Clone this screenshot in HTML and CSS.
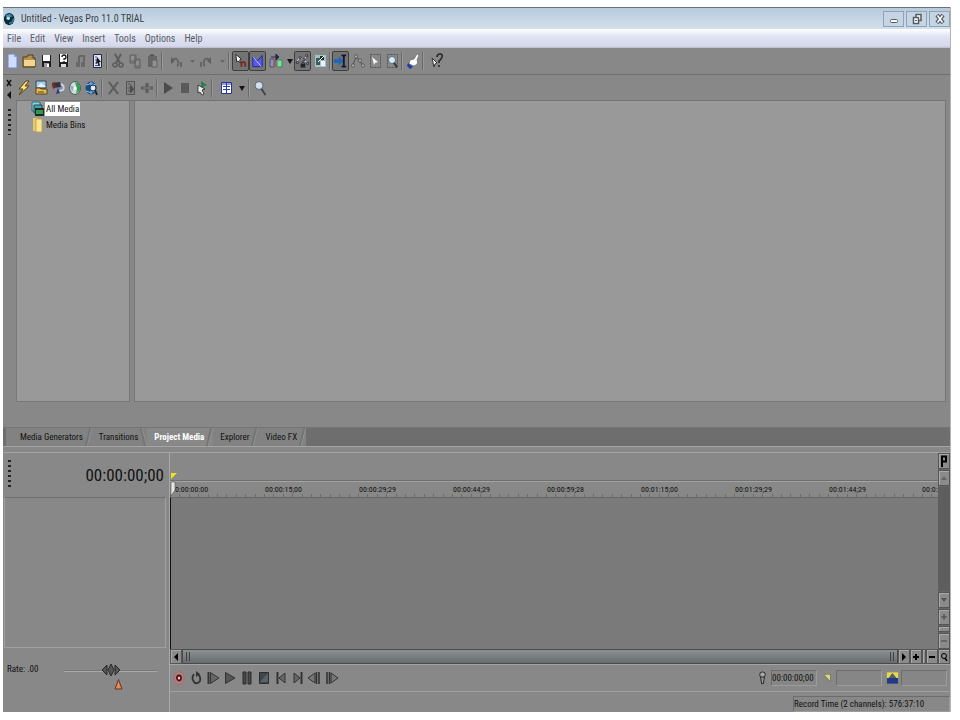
FILE: index.html
```html
<!DOCTYPE html>
<html lang="en">
<head>
<meta charset="utf-8">
<title>Untitled - Vegas Pro 11.0 TRIAL</title>
<link rel="stylesheet" href="styles.css">
</head>
<body>
<div class="window">
  <header class="titlebar">
    <svg class="logo" viewBox="0 0 16 16"><ellipse cx="7" cy="8" rx="6" ry="7" fill="#0d2b38"/><path d="M3 4q5-4 8 1l-3 1q-2-2-3 1z" fill="#3b8fae"/><circle cx="6" cy="7" r="2" fill="#b9e3ee"/><path d="M7 13q5-1 5-6" stroke="#2f7f98" stroke-width="2" fill="none"/></svg>
    <h1>Untitled - Vegas Pro 11.0 TRIAL</h1>
    <div class="winbtns">
      <button aria-label="Minimize"><svg viewBox="0 0 16 14"><rect x="4.500" y="7.500" width="7" height="3" rx="1" fill="#fff" stroke="#555c66"/></svg></button>
      <button aria-label="Restore"><svg viewBox="0 0 16 14"><path d="M7 2.500h5v6H7z" fill="#fff" stroke="#555c66" stroke-width="1.500"/><path d="M4.500 5.500h5v6h-5z" fill="#fff" stroke="#555c66" stroke-width="1.500"/><path d="M6 8.500h2" stroke="#555c66"/></svg></button>
      <button aria-label="Close"><svg viewBox="0 0 16 14"><path d="M5 3l6 8M11 3l-6 8" stroke="#555c66" stroke-width="4"/><path d="M5.500 3.500l5 7M10.500 3.500l-5 7" stroke="#fff" stroke-width="1.500"/></svg></button>
    </div>
  </header>
  <nav class="menu">
    <button>File</button><button>Edit</button><button>View</button><button>Insert</button><button>Tools</button><button>Options</button><button>Help</button>
  </nav>
  <div class="toolbar main-tools">
    <button aria-label="New"><svg viewBox="0 0 16 16"><path d="M4 1h6l3 3v11H4z" fill="#cfdcff" stroke="#6f86c8"/><path d="M10 1v3h3" fill="#8fa7e8"/></svg></button>
    <button aria-label="Open"><svg viewBox="0 0 16 16"><path d="M2 14V4h4l1-2h5v3h2v9z" fill="#b4924a" stroke="#4d3d1c"/><path d="M3 7h11v6H3z" fill="#f1d590"/></svg></button>
    <button aria-label="Save"><svg viewBox="0 0 16 16"><path d="M4 2h9v12H4z" fill="#1d1d22"/><path d="M5 2h7v6H5z" fill="#fff"/><path d="M6 10h5v4H6z" fill="#999"/><path d="M9 11h2v3H9z" fill="#fff"/></svg></button>
    <button aria-label="Save As"><svg viewBox="0 0 16 16"><path d="M4 1h9v13H4z" fill="#1d1d22"/><path d="M5 1h7v8H5z" fill="#fff"/><path d="M7 4q0-2 2-2t2 2-2 2v1M9 8v1" stroke="#111" stroke-width="1.300" fill="none"/><path d="M6 11h5v3H6z" fill="#ddd"/></svg></button>
    <button aria-label="Render As"><svg viewBox="0 0 16 16"><path d="M7 3h5v9M7 3v6" stroke="#666" stroke-width="2" fill="none"/><path d="M4 9h4v5H4zM9 9h4v5H9z" fill="#696969"/></svg></button>
    <button aria-label="Properties"><svg viewBox="0 0 16 16"><path d="M4.500 1.500h8v13h-8z" fill="#dce0f8" stroke="#222840"/><path d="M6 4h2M6 7h2M6 10h2M6 12.500h5" stroke="#4c5680"/><path d="M8 4l4 5-2 .3 1 3-1.500.5-1-3L7 11z" fill="#151515"/></svg></button>
    <i class="sep"></i>
    <button disabled aria-label="Cut"><svg viewBox="0 0 16 16"><path d="M5 1l5 9M11 1l-5 9" stroke="#5d5d5d" stroke-width="2"/><circle cx="5" cy="12" r="2" fill="none" stroke="#5d5d5d" stroke-width="1.600"/><circle cx="11" cy="12" r="2" fill="none" stroke="#5d5d5d" stroke-width="1.600"/></svg></button>
    <button disabled aria-label="Copy"><svg viewBox="0 0 16 16"><path d="M3 2h6v8H3zM8 6h5v9H8z" fill="#777" stroke="#636363"/><path d="M4 4h3M4 6h3M9 9h3M9 11h3" stroke="#aaa"/></svg></button>
    <button disabled aria-label="Paste"><svg viewBox="0 0 16 16"><path d="M4 3h9v11H4z" fill="#666"/><path d="M5 3q3-4 6 0z" fill="#555"/><path d="M8 7h5v7H8z" fill="#8f8f8f" stroke="#606060"/></svg></button>
    <i class="sep"></i>
    <button class="wide" disabled aria-label="Undo"><svg viewBox="0 0 16 16"><path d="M4 7q5-3 6 1t-1 5M13 9v5" stroke="#666" stroke-width="2" fill="none"/><path d="M3 4l0 7 4-3z" fill="#5f5f5f"/></svg></button>
    <button class="drop" disabled aria-label="Undo list"><svg viewBox="0 0 8 16"><path d="M2 7h5L4.500 10z" fill="#666"/></svg></button>
    <button class="wide" disabled aria-label="Redo"><svg viewBox="0 0 16 16"><path d="M12 7q-5-3-6 1t1 5M3 9v5" stroke="#666" stroke-width="2" fill="none"/><path d="M13 4l0 7-4-3z" fill="#5f5f5f"/></svg></button>
    <button class="drop" disabled aria-label="Redo list"><svg viewBox="0 0 8 16"><path d="M2 7h5L4.500 10z" fill="#666"/></svg></button>
    <i class="sep spaced"></i>
    <button class="on" aria-label="Enable Snapping"><svg viewBox="0 0 16 16"><path d="M3 1l6 5-2 1 1 3-3-2-1 1z" fill="#fff" stroke="#222"/><path d="M9 14v-3q0-2 2-2t2 2v3" stroke="#7a2a20" stroke-width="2" fill="none"/></svg></button>
    <button class="on" aria-label="Automatic Crossfades"><svg viewBox="0 0 16 16"><path d="M3 3l5 5 5-6v12H3z" fill="#5a5af0" stroke="#22229a"/><path d="M3 3l9 11" stroke="#bfc3ff"/></svg></button>
    <button class="mid" aria-label="Auto Ripple"><svg viewBox="0 0 16 16"><path d="M2 6h4v8H2z" fill="#9090c8" stroke="#555"/><path d="M9 7h5v7H9z" fill="#7fdc9c" stroke="#3c8a58"/><path d="M7.500 1v13" stroke="#cd4848"/><path d="M3 4h8M8 1l3 3-3 3z" stroke="#222a55" fill="#222a55"/></svg></button>
    <button class="drop tall" aria-label="Ripple mode"><svg viewBox="0 0 8 16"><path d="M1 6h6L4 11z" fill="#161616"/></svg></button>
    <button class="on" aria-label="Lock Envelopes"><svg viewBox="0 0 16 16"><path d="M2 9l3-5 4 3 4-5M9 7l5 3" stroke="#dde" fill="none"/><path d="M1.500 8.500h2v2h-2zM4.500 3.500h2v2h-2zM8.500 5.500h2v2h-2zM11.500 1.500h2v2h-2zM12.500 9.500h2v2h-2z" fill="#a9b3c4" stroke="#223" stroke-width=".8"/><path d="M6 11h5v4H6z" fill="#20242c"/><path d="M7 11q1.500-4 3 0" fill="none" stroke="#20242c"/></svg></button>
    <button aria-label="Ignore Event Grouping"><svg viewBox="0 0 16 16"><path d="M3 2h11v12H3z" fill="#a6c3c4"/><path d="M4 5h4v7H4z" fill="#3e5a5c"/><path d="M8 3h4v4H8z" fill="#1e2c2c"/><path d="M9 8h4v5H9z" fill="#eef"/><path d="M6 9l6-6" stroke="#fff"/></svg></button>
    <i class="sep"></i>
    <button class="on" aria-label="Normal Edit Tool"><svg viewBox="0 0 16 16"><path d="M1 6h5V3l5 5-5 5v-3H1z" fill="#1f66b8"/><path d="M9 2h5M11.500 2v12M9 14h5" stroke="#101830" stroke-width="2"/></svg></button>
    <button aria-label="Envelope Edit Tool"><svg viewBox="0 0 16 16"><path d="M3 12l3-8 4 4 3 5" stroke="#555" fill="none"/><path d="M2 11h2v3H2zM5 2h2v3H5zM9 6h2v3H9zM12 11h2v3h-2z" fill="#eee" stroke="#333" stroke-width=".7"/></svg></button>
    <button aria-label="Selection Edit Tool"><svg viewBox="0 0 16 16"><path d="M3.500 1.500h10v13h-10z" fill="none" stroke="#555" stroke-dasharray="2 1"/><path d="M5 4l6 5-3 1-1 2z" fill="#f5f5f5"/></svg></button>
    <button aria-label="Zoom Edit Tool"><svg viewBox="0 0 16 16"><path d="M3.500 1.500h10v13h-10z" fill="none" stroke="#555" stroke-dasharray="2 1"/><circle cx="8" cy="7" r="3.500" fill="#dcecf6" stroke="#56707f"/><path d="M10 10l3 4" stroke="#333" stroke-width="2"/></svg></button>
    <i class="sep"></i>
    <button aria-label="Show Me How"><svg viewBox="0 0 16 16"><path d="M12 1l2 1-2 5q2 4-3 6l-5-2 1-4 4-1z" fill="#fff" stroke="#666" stroke-width=".7"/><path d="M3 10l5 4-3 2-3-3z" fill="#2439a8"/></svg></button>
    <i class="sep"></i>
    <button class="wide" aria-label="What's This Help"><svg viewBox="0 0 16 16"><path d="M3 5l5 5-2 1-1 3z" fill="#fff" stroke="#333"/><path d="M8 4q0-3 3-3t2 3-3 4v2M10 12v2" stroke="#292929" stroke-width="1.600" fill="none"/></svg></button>
  </div>

  <section class="dock">
    <div class="grip">
      <button aria-label="Close dock"><svg viewBox="0 0 8 8"><path d="M2 1l4 6M6 1L2 7" stroke="#111" stroke-width="1.400"/></svg></button>
      <button aria-label="Collapse dock"><svg viewBox="0 0 8 8"><path d="M6 0v8L2 4z" fill="#111"/></svg></button>
      <span class="dots"></span>
    </div>
    <div class="dock-body">
      <div class="toolbar">
        <button aria-label="Remove Unused Media"><svg viewBox="0 0 16 16"><path d="M10 1L3 9h4l-4 6 10-9H9l4-5z" fill="#ffe07a" stroke="#54400a"/></svg></button>
        <button aria-label="Import Media"><svg viewBox="0 0 16 16"><path d="M3 1h10v7H3z" fill="#a9cbe6" stroke="#2d4a63"/><path d="M4 7l4-4 5 4" fill="#e9f3fa"/><path d="M3 14V8h4l1 1h6v5z" fill="#e7bd57" stroke="#5a4212"/><path d="M5 12h6" stroke="#5a4212"/></svg></button>
        <button aria-label="Capture Video"><svg viewBox="0 0 16 16"><path d="M2 3l8-1 1 5-8 1z" fill="#30343c"/><path d="M2 3l3-1v6l-2 1z" fill="#7e2525"/><path d="M11 4q4 2 2 6l-4 1" fill="none" stroke="#c3ccea" stroke-width="2"/><path d="M8 8l-2 6 4-1z" fill="#2b3b8a"/></svg></button>
        <button aria-label="Extract Audio from CD"><svg viewBox="0 0 16 16"><ellipse cx="8" cy="8" rx="5.500" ry="6.500" fill="#cfe0d8" stroke="#4a5a58"/><path d="M8 2q6 1 5 8l-4 4 1-5z" fill="#2fa052"/><path d="M3 5l4 2-2 5z" fill="#8fa2cb"/><circle cx="8" cy="8" r="1.500" fill="#fff"/></svg></button>
        <button aria-label="Get Media from the Web"><svg viewBox="0 0 16 16"><ellipse cx="7" cy="8" rx="5.500" ry="6.500" fill="#1c4d86"/><path d="M2 5q5-3 10 0M2 11q4 3 9 0M7 2v12" stroke="#8fc3ee" fill="none"/><circle cx="9" cy="8" r="3" fill="#d7ecfa" stroke="#1b2836"/><path d="M11 10l2 5" stroke="#1b2836" stroke-width="2"/></svg></button>
        <i class="sep"></i>
        <button disabled aria-label="Remove"><svg viewBox="0 0 16 16"><path d="M4 2l9 12M13 2L4 14" stroke="#5b5b5b" stroke-width="2"/></svg></button>
        <button disabled aria-label="Media Properties"><svg viewBox="0 0 16 16"><path d="M4.500 1.500h8v13h-8z" fill="#808080" stroke="#555"/><path d="M6 4h2M6 8h2M6 11h2" stroke="#555"/><path d="M8 4l4 5-2 3-2 1z" fill="#4c4c4c"/></svg></button>
        <button disabled aria-label="Media FX"><svg viewBox="0 0 16 16"><path d="M2 8h12M8 3v10" stroke="#5b5b5b" stroke-width="3"/><path d="M4 8h8" stroke="#888"/></svg></button>
        <i class="sep"></i>
        <button disabled aria-label="Play media"><svg viewBox="0 0 16 16"><path d="M4 2l9 6-9 6z" fill="#4c4c4c"/></svg></button>
        <button disabled aria-label="Stop media"><svg viewBox="0 0 16 16"><path d="M4 3h8v10H4z" fill="#5a5a5a"/></svg></button>
        <button aria-label="Auto Preview"><svg viewBox="0 0 16 16"><path d="M7 1l6 4-6 3z" fill="#258052"/><path d="M4 5v8l2-1 2 3 2-1-2-4 3-1z" fill="#eee" stroke="#222" stroke-width=".8"/></svg></button>
        <i class="sep"></i>
        <button class="wide" aria-label="Views"><svg viewBox="0 0 16 16"><path d="M3.500 2.500h10v11h-10z" fill="#fff" stroke="#2433a0"/><path d="M4 4h9M8.500 3v10M5 6.500h7M5 9.500h7" stroke="#2c3cae"/></svg></button>
        <button class="drop" aria-label="View list"><svg viewBox="0 0 8 16"><path d="M1 6h6L4 11z" fill="#161616"/></svg></button>
        <i class="sep spaced"></i>
        <button aria-label="Search Media Bins"><svg viewBox="0 0 16 16"><circle cx="6" cy="5.500" r="4" fill="#cfe0ea" stroke="#56646d"/><path d="M8.500 9l4 6" stroke="#444" stroke-width="2"/></svg></button>
      </div>
      <div class="panes">
        <ul class="tree">
          <li><svg viewBox="0 0 14 16"><path d="M1 1h8v9H1z" fill="#8fd2d4" stroke="#2a6a7a"/><path d="M3 4h8v8H3z" fill="#4f9fae" stroke="#1d5060"/><path d="M4 7h9v8H4z" fill="#1d2b24" /><path d="M5 9h7v4H5z" fill="#2f9a4c"/></svg><span class="selected">All Media</span></li>
          <li><svg viewBox="0 0 14 16"><path d="M2 1h5v13H2z" fill="#e8c764"/><path d="M5 2h6v13H5z" fill="#f8e596" stroke="#c29d3c" stroke-width=".8"/></svg><span>Media Bins</span></li>
        </ul>
        <div class="bin"></div>
      </div>
    </div>
  </section>
  <div class="tabs" role="tablist">
    <button role="tab">Media Generators</button><button role="tab">Transitions</button><button role="tab" class="active" aria-selected="true">Project Media</button><button role="tab">Explorer</button><button role="tab">Video FX</button>
  </div>

  <section class="timeline">
    <aside>
      <div class="clock"><span class="dots"></span><output>00:00:00;00</output></div>
      <div class="tracklist"></div>
      <div class="rate">
        <label for="rate">Rate: .00</label>
        <div class="sliders">
          <input id="rate" class="wheel" type="range" min="0" max="100" value="50">
          <input class="normal" type="range" min="0" max="100" value="60" aria-label="Normal rate">
        </div>
      </div>
    </aside>
    <div class="stage">
      <div class="upper">
        <div class="lanes">
          <div class="markers"></div>
          <div class="ruler">
            <span>0:00:00:00</span><span>00:00:15;00</span><span>00:00:29;29</span><span>00:00:44;29</span><span>00:00:59;28</span><span>00:01:15;00</span><span>00:01:29;29</span><span>00:01:44;29</span><span>00:0:</span>
            <svg class="cursor" viewBox="0 0 8 24"><path d="M1 0h6L1 6z" fill="#f2e21c"/><path d="M1 9h4v8l-4 6z" fill="#e6e6e6" stroke="#555" stroke-width=".6"/></svg>
          </div>
          <div class="tracks"></div>
        </div>
        <div class="vscroll">
          <button class="pin" aria-label="Markers"><svg viewBox="0 0 10 14"><path d="M3 13V2.500h4v5H3" stroke="#000" stroke-width="2" fill="none"/></svg></button>
          <button aria-label="Scroll up"><svg viewBox="0 0 10 14"><path d="M2 9h6L5 5z" fill="#666"/></svg></button>
          <div class="groove"></div>
          <button aria-label="Scroll down"><svg viewBox="0 0 10 14"><path d="M2 5h6L5 9z" fill="#555"/></svg></button>
          <button aria-label="Zoom in height"><svg viewBox="0 0 10 14"><path d="M2 7h6M5 4v6" stroke="#444"/></svg></button>
          <button class="thin" aria-label="Zoom height"></button>
          <button aria-label="Zoom out height"><svg viewBox="0 0 10 14"><path d="M2 7h6" stroke="#444"/></svg></button>
        </div>
      </div>
      <div class="hscroll">
        <button aria-label="Scroll left"><svg viewBox="0 0 10 14"><path d="M7 3v8L3 7z" fill="#000"/></svg></button>
        <div class="thumb"><i></i><i></i></div>
        <button aria-label="Scroll right"><svg viewBox="0 0 10 14"><path d="M3 3v8l4-4z" fill="#000"/></svg></button>
        <button aria-label="Zoom in time"><svg viewBox="0 0 10 14"><path d="M2 7h6M5 4v6" stroke="#000" stroke-width="2"/></svg></button>
        <button class="thin" aria-label="Zoom time"></button>
        <button aria-label="Zoom out time"><svg viewBox="0 0 10 14"><path d="M2 7h6" stroke="#000" stroke-width="2"/></svg></button>
        <button aria-label="Zoom tool"><svg viewBox="0 0 10 14"><circle cx="5" cy="6" r="2.500" fill="none" stroke="#000"/><path d="M6 8l2 3" stroke="#000" stroke-width="1.500"/></svg></button>
      </div>
      <div class="transport">
        <button aria-label="Record"><svg viewBox="0 0 16 16"><ellipse cx="8" cy="8" rx="5" ry="6.500" fill="#a88482" stroke="#b96468"/><ellipse cx="8" cy="8" rx="2" ry="2.500" fill="#ddd" stroke="#5c0f14" stroke-width="1.800"/></svg></button>
        <button aria-label="Loop Playback"><svg viewBox="0 0 16 16"><path d="M6 4q-3 4 0 8 3 3 6-1 1-4-2-7" fill="none" stroke="#333" stroke-width="1.800"/><path d="M8 1l4 3-4 3z" fill="#333"/></svg></button>
        <button aria-label="Play From Start"><svg viewBox="0 0 16 16"><path d="M3.500 2v12" stroke="#333" stroke-width="2"/><path d="M5.500 2.500L14 8l-8.500 5.500z" fill="#666" stroke="#333"/></svg></button>
        <button aria-label="Play"><svg viewBox="0 0 16 16"><path d="M3.500 2.500L13 8l-9.500 5.500z" fill="#555" stroke="#333"/></svg></button>
        <button aria-label="Pause"><svg viewBox="0 0 16 16"><path d="M4 2h3v12H4zM9 2h3v12H9z" fill="#484848" stroke="#2d2d2d"/></svg></button>
        <button aria-label="Stop"><svg viewBox="0 0 16 16"><path d="M3.500 2.500h9v11h-9z" fill="#3f464c" stroke="#2b2b2b"/><path d="M4 12l8-9v9z" fill="#59636b"/></svg></button>
        <button aria-label="Go to Start"><svg viewBox="0 0 16 16"><path d="M4.500 2v12" stroke="#333" stroke-width="2"/><path d="M12 3v10L6 8z" fill="#666" stroke="#333"/></svg></button>
        <button aria-label="Go to End"><svg viewBox="0 0 16 16"><path d="M11.500 2v12" stroke="#333" stroke-width="2"/><path d="M4 3v10l6-5z" fill="#666" stroke="#333"/></svg></button>
        <button aria-label="Previous Frame"><svg viewBox="0 0 16 16"><path d="M8 3v10L1 8z" fill="#777" stroke="#333"/><path d="M9.500 2v12M12 2v12" stroke="#333" stroke-width="1.600"/></svg></button>
        <button aria-label="Next Frame"><svg viewBox="0 0 16 16"><path d="M7 3v10l7-5z" fill="#777" stroke="#333"/><path d="M3 2v12M5.500 2v12" stroke="#333" stroke-width="1.600"/></svg></button>
        <div class="fields">
          <svg viewBox="0 0 16 16"><circle cx="8" cy="4.500" r="3" fill="#aaa" stroke="#222"/><path d="M6 7h4l-1 7H7z" fill="#999" stroke="#222"/></svg>
          <input aria-label="Cursor position" value="00:00:00;00">
          <svg viewBox="0 0 16 16"><path d="M4 4h7v8z" fill="#dfdc78" stroke="#555" stroke-width=".6"/></svg>
          <input aria-label="Selection start">
          <svg viewBox="0 0 16 16"><path d="M2 2h12v12H2z" fill="#e8d84a"/><path d="M2 8h2l4-5 4 5h2v6H2z" fill="#233a86"/><path d="M4 8l4-5 4 5z" fill="#55606a"/></svg>
          <input aria-label="Selection length">
        </div>
      </div>
      <footer><p>Record Time (2 channels): 576:37:10</p></footer>
    </div>
  </section>
</div>
</body>
</html>
```
FILE: styles.css
```css
* { box-sizing: border-box; }
body {
  margin: 0;
  padding: 7px 9px 8px 3px;
  min-height: 100vh;
  display: flex;
  background: #fff;
  font: 9px/14px "Roboto Condensed", Roboto, "Liberation Sans", sans-serif;
  color: #111;
}
button, input { font: inherit; color: inherit; }
button { border: 0; padding: 0; margin: 0; background: none; white-space: nowrap; }
svg { display: block; }
h1, p, ul { margin: 0; padding: 0; }

.window {
  flex: 1;
  display: flex;
  flex-direction: column;
  min-width: 0;
  background: #888;
  border-right: 1px solid #b4b4b4;
}
.titlebar {
  display: flex;
  align-items: center;
  height: 22px;
  border-top: 1px solid #68747c;
  background: linear-gradient(#b7cbdb, #d3e0ec);
}
.logo { width: 14px; height: 16px; }
h1 { flex: 1; margin-left: 4px; font-size: 10px; font-weight: normal; color: #3c4248; }
.winbtns { display: flex; gap: 2px; }
.winbtns button {
  width: 21px;
  height: 16px;
  border: 1px solid #8fa3b7;
  background: #c5d5e4;
  display: grid;
  place-items: center;
}
.winbtns svg { width: 16px; height: 14px; }
.menu {
  display: flex;
  gap: 9px;
  height: 19px;
  padding: 0 4px;
  background: linear-gradient(#fff, #dfe3f3 40%, #d4d8ea 90%, #b9bcc8);
  font-size: 10px;
  color: #5a5e66;
}

.toolbar { display: flex; align-items: center; height: 25px; }
.main-tools { height: 27px; border-bottom: 1px solid #6e6e6e; }
.toolbar button { width: 17px; height: 20px; display: grid; place-items: center; }
.toolbar svg { width: 16px; height: 16px; }
.toolbar .wide { width: 24px; }
.toolbar .mid { width: 19px; }
.toolbar .drop { width: 6px; }
.toolbar .drop svg { width: 8px; }
.toolbar .tall { width: 9px; }
.toolbar .on { border: 1px solid #3e3e3e; border-radius: 2px; background: #747474; }
.toolbar .on svg { width: 15px; }
.sep {
  width: 2px;
  height: 18px;
  margin: 0 1px;
  border-left: 1px solid #6a6a6a;
  border-right: 1px solid #989898;
}
.spaced { margin: 0 2px 0 4px; }

.dock { flex: 352; display: flex; }
.grip {
  width: 12px;
  padding-top: 4px;
  display: flex;
  flex-direction: column;
  align-items: center;
  gap: 4px;
}
.grip button, .grip svg { width: 8px; height: 8px; }
.dots { width: 3px; height: 26px; background: repeating-linear-gradient(#222 0 2px, transparent 2px 5px); }
.grip .dots { margin-top: 6px; }
.dock-body { flex: 1; display: flex; flex-direction: column; padding: 0 4px 25px 0; }
.panes { flex: 1; display: flex; gap: 4px; margin-left: 1px; border-top: 1px solid #747474; }
.tree {
  width: 114px;
  padding: 0 0 0 14px;
  list-style: none;
  background: #999;
  border: 1px solid #777;
  border-top: 0;
}
.tree li { display: flex; align-items: center; height: 16px; }
.tree svg { width: 14px; height: 16px; }
.tree span { padding: 0 1px; }
.tree .selected { background: #fff; }
.bin { flex: 1; background: #999; border: 1px solid #777; border-top: 0; }

.tabs {
  display: flex;
  height: 19px;
  padding-left: 3px;
  background: linear-gradient(#777, #6e6e6e 2px);
}
.tabs button {
  position: relative;
  padding: 0 9px 0 7px;
  background: #828282;
  border-top: 1px solid #747474;
}
.tabs button:first-child { padding-left: 14px; }
.tabs button::after {
  content: "";
  position: absolute;
  right: 2px;
  top: 0;
  bottom: 0;
  width: 2px;
  background: #747474;
  border-right: 1px solid #949494;
  transform: skewX(-14deg);
}
.tabs button:nth-child(2)::after { transform: skewX(14deg); }
.tabs .active { background: #888; color: #fff; font-weight: bold; }

.timeline {
  flex: 260;
  display: flex;
  border-top: 1px solid #a4a4a4;
  padding-top: 5px;
}
aside { width: 166px; display: flex; flex-direction: column; border-top: 1px solid #a4a4a4; }
.clock {
  height: 44px;
  display: flex;
  align-items: center;
  justify-content: space-between;
  padding: 0 5px;
}
.clock .dots { height: 27px; align-self: flex-start; margin-top: 7px; }
.clock output { font-size: 17px; line-height: 24px; }
.tracklist { flex: 1; margin: 0 3px 0 1px; border: 1px solid #a0a0a0; border-top-color: #6e6e6e; }
.rate { height: 64px; display: flex; padding: 14px 0 0 4px; }
.rate label { width: 57px; }
.sliders { width: 93px; padding-top: 1px; }
.sliders input {
  display: block;
  appearance: none;
  width: 100%;
  height: 14px;
  margin: 0;
  background: none;
}
.sliders .wheel { background: linear-gradient(#777, #777) 0 7px / 100% 1px no-repeat, linear-gradient(#aaa, #aaa) 0 8px / 100% 1px no-repeat; }
.wheel::-webkit-slider-thumb {
  appearance: none;
  width: 20px;
  height: 12px;
  background: url("data:image/svg+xml,%3Csvg xmlns='http://www.w3.org/2000/svg' viewBox='0 0 20 12'%3E%3Cpath d='M6 1L1 6l5 5zM14 1l5 5-5 5zM10 0L7 6l3 6 3-6z' fill='%23555' stroke='%23282828'/%3E%3C/svg%3E");
}
.normal::-webkit-slider-thumb {
  appearance: none;
  width: 9px;
  height: 12px;
  background: url("data:image/svg+xml,%3Csvg xmlns='http://www.w3.org/2000/svg' viewBox='0 0 9 12'%3E%3Cpath d='M4.500 1.500L8 11H1z' fill='%23e08a60' stroke='%236d2f18'/%3E%3C/svg%3E");
}

.stage { flex: 1; min-width: 0; display: flex; flex-direction: column; border-left: 1px solid #a8a8a8; }
.upper { flex: 1; display: flex; border-top: 1px solid #a4a4a4; }
.lanes { flex: 1; min-width: 0; display: flex; flex-direction: column; }
.markers { height: 28px; border-bottom: 1px solid #6e6e6e; }
.ruler {
  position: relative;
  display: flex;
  height: 16px;
  border-top: 1px solid #a4a4a4;
  font-size: 8px;
  line-height: 15px;
}
.ruler span {
  flex: 0 0 94px;
  padding-left: 1px;
  background: repeating-linear-gradient(90deg, #6c6c6c 0 1px, transparent 1px 10%) 0 100% / 100% 3px no-repeat;
}
.ruler span:first-child { padding-left: 5px; }
.ruler span:nth-child(9) { flex: 1; padding: 0; min-width: 0; background-size: 94px 3px; }
.cursor { position: absolute; left: 0; bottom: 0; width: 8px; height: 24px; }
.tracks { flex: 1; background: #7a7a7a; border-left: 1px solid #111; border-top: 1px solid #666; }
.vscroll { width: 12px; display: flex; flex-direction: column; gap: 1px; background: #666; }
.vscroll button, .hscroll button {
  display: grid;
  place-items: center;
  background: #8b8b8b;
  border: 1px solid #555;
  box-shadow: inset 1px 1px #aaa;
}
.vscroll button { height: 16px; }
.vscroll svg, .hscroll svg { width: 10px; height: 14px; }
.vscroll .thin { height: 6px; }
.groove { flex: 1; background: #5e5e5e; }
.hscroll { display: flex; height: 15px; background: #666; }
.hscroll button { width: 12px; }
.hscroll .thin { width: 4px; }
.thumb {
  flex: 1;
  display: flex;
  justify-content: space-between;
  align-items: center;
  padding: 0 3px;
  border: 1px solid #4a4a4a;
  background: linear-gradient(#8c9192, #676c6e);
}
.thumb i { width: 4px; height: 9px; border: 1px solid #3f3f3f; border-width: 0 1px; }
.transport {
  display: flex;
  align-items: center;
  height: 28px;
  border-top: 1px solid #a4a4a4;
  border-bottom: 1px solid #a0a0a0;
}
.transport button { width: 17px; display: grid; place-items: center; }
.transport svg { width: 16px; height: 16px; }
.fields { margin-left: auto; padding-right: 3px; display: flex; align-items: center; }
.fields svg { width: 15px; margin-right: 1px; }
.fields input {
  width: 46px;
  height: 16px;
  padding: 0;
  margin: 0 3px 0 0;
  border: 1px solid #9c9c9c;
  border-color: #6c6c6c #9c9c9c #9c9c9c #6c6c6c;
  background: #868686;
}
.fields input:last-child { margin-right: 0; }
footer { display: flex; justify-content: flex-end; height: 20px; padding-top: 4px; }
footer p {
  width: 157px;
  border: 1px solid #6c6c6c;
  border-color: #6c6c6c #9c9c9c #9c9c9c #6c6c6c;
  white-space: nowrap;
}
```
